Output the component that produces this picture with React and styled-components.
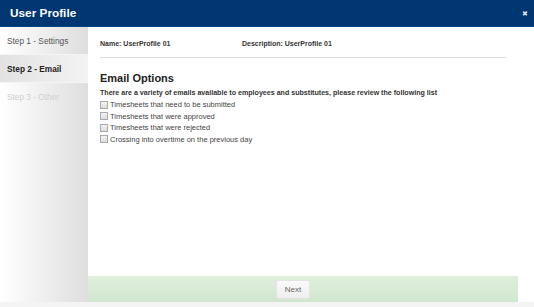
import styled, { createGlobalStyle } from 'styled-components'

const GlobalStyle = createGlobalStyle`
    html, body {
        margin: 0;
        padding: 0;
        background: #f4f4f4;
    }
    body {
        font-family: 'Liberation Sans', Arial, sans-serif;
    }
`

const steps = [
    { label: 'Step 1 - Settings', state: 'done' },
    { label: 'Step 2 - Email', state: 'active' },
    { label: 'Step 3 - Other', state: 'disabled' },
]

const options = [
    'Timesheets that need to be submitted',
    'Timesheets that were approved',
    'Timesheets that were rejected',
    'Crossing into overtime on the previous day',
]

export default function App(){
    return(
        <>
            <GlobalStyle />
            <Dialog>
                <Header>
                    <Title>User Profile</Title>
                    <Close>✖</Close>
                </Header>
                <Body>
                    <Sidebar>
                        {steps.map(s => (
                            <Step key={s.label} state={s.state}>{s.label}</Step>
                        ))}
                    </Sidebar>
                    <Pane>
                        <Content>
                            <InfoRow>
                                <Info>Name: UserProfile 01</Info>
                                <Info>Description: UserProfile 01</Info>
                            </InfoRow>
                            <Divider />
                            <Heading>Email Options</Heading>
                            <Lead>There are a variety of emails available to employees and substitutes, please review the following list</Lead>
                            <OptionList>
                                {options.map(o => (
                                    <Option key={o}>
                                        <Box />
                                        {o}
                                    </Option>
                                ))}
                            </OptionList>
                        </Content>
                        <Footer>
                            <NextButton>Next</NextButton>
                        </Footer>
                    </Pane>
                    <Gutter />
                </Body>
            </Dialog>
        </>
    )
}

const Dialog = styled.div`
    width: 534px;
    height: 302px;
    display: flex;
    flex-direction: column;
    background: #ffffff;
`

const Header = styled.div`
    height: 27px;
    flex-shrink: 0;
    background-color: #003671;
    border-bottom: 1px solid #0a4585;
    box-sizing: border-box;
    display: flex;
    align-items: center;
    justify-content: space-between;
    padding: 0 6px 0 10px;
`

const Title = styled.div`
    color: #ffffff;
    font-weight: bold;
    font-size: 11.8px;
`

const Close = styled.div`
    color: #dfe6ef;
    font-size: 7px;
    margin-top: 2px;
`

const Body = styled.div`
    flex: 1;
    display: flex;
    min-height: 0;
`

const Sidebar = styled.div`
    width: 88px;
    flex-shrink: 0;
    background: linear-gradient(to right, #ffffff, #dedede);
    display: flex;
    flex-direction: column;
`

const Step = styled.div`
    height: 28px;
    box-sizing: border-box;
    display: flex;
    align-items: center;
    padding-left: 7px;
    font-size: 8.3px;
    border-bottom: ${props => props.state === 'disabled' ? 'none' : '1px solid #f4f4f4'};
    color: ${props => props.state === 'active' ? '#222222' : props.state === 'disabled' ? '#cfcfcf' : '#555555'};
    font-weight: ${props => props.state === 'active' ? 'bold' : 'normal'};
    background: ${props => props.state === 'active' ? 'linear-gradient(to right, #e2e2e2, #f3f3f3)' : 'transparent'};
`

const Pane = styled.div`
    flex: 1;
    display: flex;
    flex-direction: column;
`

const Content = styled.div`
    flex: 1;
    padding: 12px 12px 0 12px;
    color: #333333;
`

const InfoRow = styled.div`
    display: flex;
    height: 9px;
    align-items: center;
`

const Info = styled.div`
    width: 142px;
    font-size: 7px;
    font-weight: bold;
    color: #333333;
`

const Divider = styled.div`
    height: 1px;
    background: #dddddd;
    margin: 9px 0 13px 0;
`

const Heading = styled.div`
    font-size: 11px;
    font-weight: bold;
    color: #222222;
    line-height: 14px;
`

const Lead = styled.div`
    font-size: 7.1px;
    font-weight: bold;
    color: #333333;
    margin-top: 3px;
    line-height: 10px;
`

const OptionList = styled.div`
    display: flex;
    flex-direction: column;
    margin-top: 1px;
`

const Option = styled.label`
    display: flex;
    align-items: center;
    height: 11.5px;
    font-size: 7.5px;
    color: #444444;
`

const Box = styled.span`
    width: 6px;
    height: 6px;
    border: 1px solid #aaaaaa;
    background: linear-gradient(#f4f4f4, #dcdcdc);
    margin-right: 2px;
    flex-shrink: 0;
`

const Footer = styled.div`
    height: 26px;
    flex-shrink: 0;
    background: linear-gradient(#dff0dc, #d0e6cf);
    display: flex;
    align-items: center;
    padding-left: 188px;
`

const NextButton = styled.button`
    width: 34px;
    height: 19px;
    padding: 0;
    border: 1px solid #e4e4e4;
    border-radius: 2px;
    background: linear-gradient(#fbfbfb, #eeeeee);
    color: #666666;
    font-family: 'Liberation Sans', Arial, sans-serif;
    font-size: 8px;
`

const Gutter = styled.div`
    width: 16px;
    flex-shrink: 0;
    background: #ffffff;
`
